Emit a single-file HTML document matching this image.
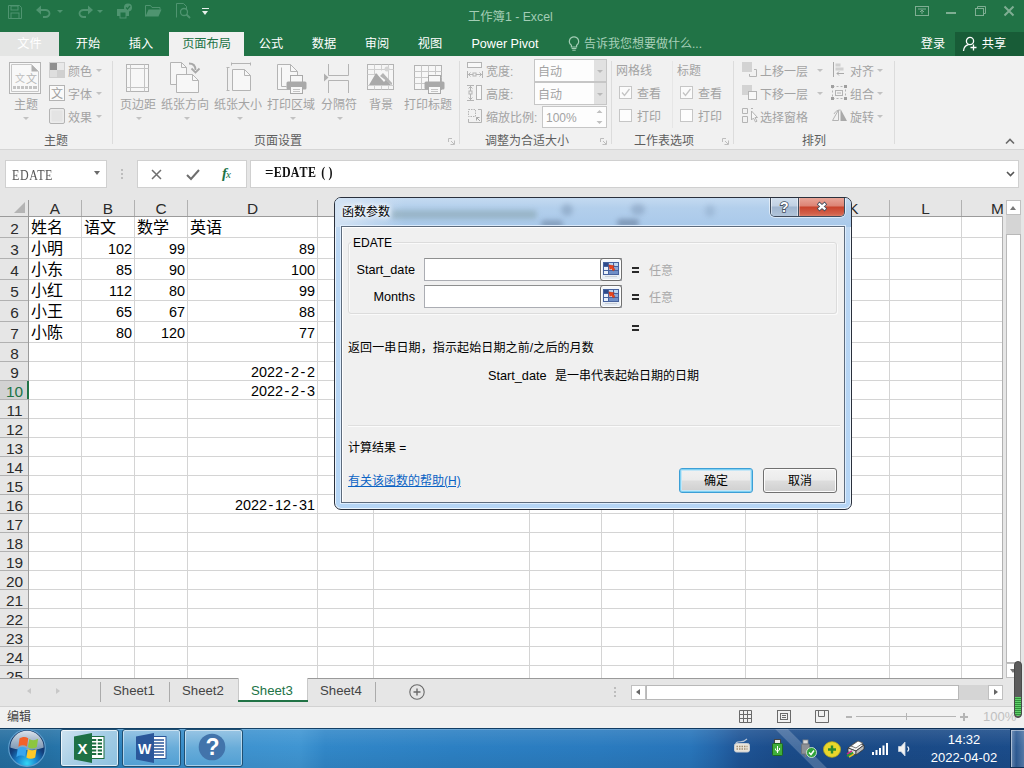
<!DOCTYPE html>
<html lang="zh-CN">
<head>
<meta charset="utf-8">
<title>工作簿1 - Excel</title>
<style>
*{box-sizing:border-box;margin:0;padding:0}
html,body{width:1024px;height:768px;overflow:hidden;background:#e6e6e6}
body{position:relative;font-family:"Liberation Sans","Noto Sans CJK SC",sans-serif;font-size:12px;color:#000}
.abs{position:absolute}
.t{position:absolute;white-space:nowrap;line-height:1}
svg{position:absolute;overflow:visible}
/* title */
#titlebar{left:0;top:0;width:1024px;height:56px;background:#217346}
.tab{position:absolute;top:32px;height:24px;line-height:24px;font-size:12.200px;color:#fff;text-align:center;white-space:nowrap}
#ribbon{left:0;top:56px;width:1024px;height:94px;background:#f1f1f1;border-bottom:1px solid #d5d5d5}
.rl{position:absolute;white-space:nowrap;line-height:1;font-size:12px;color:#a3a3a3}
.gl{position:absolute;white-space:nowrap;line-height:1;font-size:12px;color:#5e5e5e}
.vsep{position:absolute;top:61px;height:83px;width:1px;background:#dcdcdc}
.dd{position:absolute;width:0;height:0;border-left:3px solid transparent;border-right:3px solid transparent;border-top:3px solid #c2c2c2}
/* grid */
#grid{left:0;top:198px;width:1004px;height:480px;background:#fff;overflow:hidden}
.ch{position:absolute;top:0;height:18px;line-height:22px;font-size:15.400px;color:#2b2b2b;text-align:center;background:#e6e6e6}
.rh{position:absolute;left:0;width:28px;padding-left:1px;font-size:15.400px;color:#2b2b2b;text-align:center;background:#e6e6e6}
.c{position:absolute;font-size:14.67px;line-height:21px;white-space:nowrap;color:#000}
.r{text-align:right}
/* dialog */
#dlg{left:334px;top:197px;width:518px;height:313px;border:1px solid #2a303c;border-radius:7px;background:linear-gradient(180deg,#c6dbf1 0,#b9d6f4 60px,#b5d5f5 100%);box-shadow:inset 0 0 0 1px rgba(255,255,255,.75);overflow:hidden}
#dlg .d{position:absolute;white-space:nowrap;line-height:1;font-size:12px;color:#000}
#cli{left:6px;top:28px;width:504px;height:277px;border:1px solid #5d6b7c;background:#f0f0f0;box-shadow:inset 1px 1px 0 #fff,0 0 0 1px rgba(228,241,255,.85)}
.inp{position:absolute;left:424px;width:198px;height:23px;background:#fff;border:1px solid #abadb3;border-top-color:#8e8f8f}
.rbtn{position:absolute;left:600px;width:22px;height:23px;border:1px solid #707070;border-radius:3px;background:linear-gradient(180deg,#f6f9fc,#e4ebf3);box-shadow:inset 0 0 0 1px #fdfdfd}
.btn{position:absolute;top:468px;width:74px;height:25px;border:1px solid #707070;border-radius:3px;background:linear-gradient(180deg,#f2f2f2 0,#ebebeb 48%,#dddddd 52%,#cfcfcf 100%);box-shadow:inset 0 0 0 1px #fcfcfc;font-size:12px;line-height:24px;text-align:center;color:#000}
</style>
</head>
<body>

<!-- ================= TITLE BAR + TABS ================= -->
<div id="titlebar" class="abs"></div>
<!-- quick access toolbar (disabled look) -->
<svg style="left:8px;top:5px" width="14" height="14" viewBox="0 0 14 14"><path d="M.5.5h11l2 2v11H.5z" fill="none" stroke="#4f9470"/><rect x="3" y="1" width="7" height="4" fill="none" stroke="#4f9470"/><rect x="3" y="8" width="8" height="5.500" fill="none" stroke="#4f9470"/></svg>
<svg style="left:36px;top:5px" width="16" height="12" viewBox="0 0 16 12"><path d="M1 5h8.500a4 3.500 0 0 1 0 7H7" fill="none" stroke="#4f9470" stroke-width="1.800"/><path d="M0 5l5-4.500v9z" fill="#4f9470"/></svg>
<div class="dd" style="left:57px;top:10px;border-top-color:#4f9470"></div>
<svg style="left:77px;top:5px" width="16" height="12" viewBox="0 0 16 12"><path d="M15 5H6.500a4 3.500 0 0 0 0 7H9" fill="none" stroke="#4f9470" stroke-width="1.800"/><path d="M16 5l-5-4.500v9z" fill="#4f9470"/></svg>
<div class="dd" style="left:97px;top:10px;border-top-color:#4f9470"></div>
<svg style="left:116px;top:3px" width="18" height="16" viewBox="0 0 18 16"><rect x="1" y="6" width="12" height="7" fill="#4f9470"/><rect x="4" y="9" width="6" height="6" fill="#217346" stroke="#4f9470"/><circle cx="12" cy="4.500" r="4" fill="#4f9470"/><path d="M10 4.500l1.500 1.500 2.500-3" stroke="#217346" fill="none" stroke-width="1.200"/></svg>
<svg style="left:145px;top:4px" width="17" height="13" viewBox="0 0 17 13"><path d="M.5 12.500v-11h5l1.500 2h8v2" fill="none" stroke="#4f9470"/><path d="M.5 12.500l3-7h13l-3 7z" fill="#4f9470"/></svg>
<svg style="left:176px;top:3px" width="15" height="16" viewBox="0 0 15 16"><path d="M.5 14.500V.5h7l3 3v3" fill="none" stroke="#4f9470"/><circle cx="8" cy="9" r="3.500" fill="none" stroke="#4f9470" stroke-width="1.300"/><path d="M10.500 11.500l3.500 3.500" stroke="#4f9470" stroke-width="1.800"/></svg>
<div class="abs" style="left:202px;top:8px;width:7px;height:1px;background:#e8f0eb"></div>
<div class="dd" style="left:202px;top:11px;border-top-color:#e8f0eb;border-width:4px 3.500px 0 3.500px"></div>

<div class="t" style="left:468px;top:10.500px;font-size:12.300px;color:#a3cdb5">工作簿1 - Excel</div>
<div class="tab" style="left:0;width:59px;background:#e4e5e4;color:#fff">文件</div>
<div class="tab" style="left:60px;width:56px">开始</div>
<div class="tab" style="left:116px;width:50px">插入</div>
<div class="tab" style="left:169px;width:75px;background:#f1f1f1;color:#217346">页面布局</div>
<div class="tab" style="left:246px;width:50px">公式</div>
<div class="tab" style="left:299px;width:50px">数据</div>
<div class="tab" style="left:352px;width:50px">审阅</div>
<div class="tab" style="left:405px;width:50px">视图</div>
<div class="tab" style="left:460px;width:90px;font-size:12.600px">Power Pivot</div>
<svg style="left:568px;top:36px" width="12" height="15" viewBox="0 0 12 15"><path d="M6 .8a4.600 4.600 0 0 0-2.600 8.400V11h5.200V9.200A4.600 4.600 0 0 0 6 .8z" fill="none" stroke="#a3cdb5" stroke-width="1.200"/><path d="M3.600 12.500h4.800M4.300 14.200h3.400" stroke="#a3cdb5" stroke-width="1"/></svg>
<div class="tab" style="left:584px;width:120px;color:#a8d0b9;text-align:left;font-size:12px">告诉我您想要做什么...</div>
<div class="tab" style="left:908px;width:50px">登录</div>
<div class="abs" style="left:955px;top:32px;width:69px;height:24px;background:#185c37"></div>
<svg style="left:961px;top:35px" width="18" height="18" viewBox="0 0 18 18"><circle cx="9" cy="6" r="3.600" fill="none" stroke="#fff" stroke-width="1.300"/><path d="M2.500 16c.3-3.600 2.400-5.700 5-6.300" fill="none" stroke="#fff" stroke-width="1.300"/><path d="M12.500 9.500v6M9.500 12.500h6" stroke="#fff" stroke-width="1.300"/></svg>
<div class="tab" style="left:979px;width:30px">共享</div>
<!-- window controls -->
<svg style="left:915px;top:6px" width="14" height="11" viewBox="0 0 14 11"><rect x=".5" y=".5" width="13" height="9" fill="none" stroke="#7fae93"/><path d="M3 3h8M7 8V4M5 6l2-2 2 2" fill="none" stroke="#7fae93"/></svg>
<div class="abs" style="left:946px;top:12px;width:10px;height:2px;background:#7fae93"></div>
<svg style="left:975px;top:6px" width="11" height="11" viewBox="0 0 11 11"><path d="M2.500 2.500v-2h8v7h-2" fill="none" stroke="#7fae93"/><rect x=".5" y="2.500" width="8" height="7" fill="none" stroke="#7fae93"/></svg>
<svg style="left:1004px;top:6px" width="10" height="10" viewBox="0 0 10 10"><path d="M.5.5l9 9M9.500.5l-9 9" stroke="#7fae93" stroke-width="2"/></svg>


<!-- ================= RIBBON ================= -->
<div id="ribbon" class="abs"></div>
<svg style="left:9px;top:62px" width="32" height="32" viewBox="0 0 32 32"><rect x=".5" y=".5" width="31" height="31" fill="#f8f8f8" stroke="#b4b4b4"/><path d="M2.500 2.500h20l7 7v20h-27z" fill="#f8f8f8" stroke="#c6c6c6"/><path d="M22.500 2.500l7 7h-7z" fill="#b0b0b0"/><text x="6" y="20" font-size="10" fill="#c0c0c0" font-family="Liberation Sans,Noto Sans CJK SC,sans-serif">文</text><text x="17" y="21" font-size="11" fill="#b5b5b5" font-family="Liberation Sans,Noto Sans CJK SC,sans-serif">文</text><path d="M4 25.500h3M8 25.500h3M12 25.500h3M16 25.500h3M20 25.500h3M24 25.500h4" stroke="#c4c4c4" stroke-width="3"/></svg>
<div class="rl" style="left:-14.0px;width:80px;text-align:center;top:99px">主题</div>
<div class="dd" style="left:23px;top:117px;border-top-color:#c2c2c2"></div>
<svg style="left:49px;top:62px" width="16" height="16" viewBox="0 0 16 16"><rect x=".5" y=".5" width="15" height="15" fill="#f4f4f4" stroke="#cfcfcf"/><rect x="1" y="1" width="7" height="7" fill="#8f8f8f"/><rect x="8" y="1" width="7" height="7" fill="#e9e9e9"/><rect x="1" y="8" width="7" height="7" fill="#dedede"/><rect x="8" y="8" width="7" height="7" fill="#d0d0d0"/></svg>
<div class="rl" style="left:68px;top:66px">颜色</div>
<div class="dd" style="left:96px;top:69px;border-top-color:#c2c2c2"></div>
<svg style="left:49px;top:85px" width="16" height="16" viewBox="0 0 16 16"><rect x=".5" y=".5" width="15" height="15" fill="#fafafa" stroke="#b4b4b4"/><text x="2" y="13" font-size="12" fill="#a0a0a0" font-family="Liberation Sans,Noto Sans CJK SC,sans-serif">文</text></svg>
<div class="rl" style="left:68px;top:89px">字体</div>
<div class="dd" style="left:96px;top:92px;border-top-color:#c2c2c2"></div>
<svg style="left:49px;top:108px" width="16" height="16" viewBox="0 0 16 16"><rect x=".5" y=".5" width="15" height="15" rx="1.500" fill="#ececec" stroke="#b4b4b4"/><rect x="2.500" y="2.500" width="11" height="11" rx="1" fill="#e4e4e4"/></svg>
<div class="rl" style="left:68px;top:112px">效果</div>
<div class="dd" style="left:96px;top:115px;border-top-color:#c2c2c2"></div>
<div class="gl" style="left:16.0px;width:80px;text-align:center;top:135px">主题</div>
<div class="vsep" style="left:112px"></div>
<svg style="left:126px;top:64px" width="24" height="29" viewBox="0 0 24 29"><rect x=".5" y=".5" width="22" height="27" fill="#f7f7f7" stroke="#b4b4b4"/><path d="M4.500 .5v27M18.500 .5v27M.5 4.500h22M.5 23.500h22" stroke="#c4c4c4" fill="none"/></svg>
<div class="rl" style="left:98.0px;width:80px;text-align:center;top:99px">页边距</div>
<div class="dd" style="left:136px;top:117px;border-top-color:#c2c2c2"></div>
<svg style="left:170px;top:62px" width="30" height="32" viewBox="0 0 30 32"><path d="M.5 .5h11l5 5v17H.5z" fill="#f6f6f6" stroke="#b4b4b4"/><path d="M11.500 .5v5h5" fill="none" stroke="#b4b4b4"/><path d="M6.500 12.500h16l6 6v12h-22z" fill="#f7f7f7" stroke="#b4b4b4"/><path d="M22.500 12.500v6h6" fill="none" stroke="#b4b4b4"/><path d="M19 1.500c4 0 6.500 2.500 6.500 6.500" fill="none" stroke="#a8a8a8" stroke-width="1.800"/><path d="M21.500 6.500l4 4 4-4" fill="none" stroke="#a8a8a8" stroke-width="1.800"/></svg>
<div class="rl" style="left:145.0px;width:80px;text-align:center;top:99px">纸张方向</div>
<div class="dd" style="left:184px;top:117px;border-top-color:#c2c2c2"></div>
<svg style="left:226px;top:62px" width="25" height="30" viewBox="0 0 25 30"><path d="M6 1.500h18M5.500 .5v3M24.500 .5v3" stroke="#b4b4b4" fill="none"/><path d="M1.500 5v24M.5 5.500h3M.5 28.500h3" stroke="#b4b4b4" fill="none"/><path d="M6.500 7.500h12l6 6v15h-18z" fill="#f7f7f7" stroke="#b4b4b4"/><path d="M18.500 7.500v6h6" fill="none" stroke="#b4b4b4"/></svg>
<div class="rl" style="left:198.0px;width:80px;text-align:center;top:99px">纸张大小</div>
<div class="dd" style="left:237px;top:117px;border-top-color:#c2c2c2"></div>
<svg style="left:277px;top:64px" width="31" height="30" viewBox="0 0 31 30"><path d="M.5 .5h13l7 7v18H.5z" fill="#f7f7f7" stroke="#b4b4b4"/><path d="M13.500 .5v7h7" fill="none" stroke="#b4b4b4"/><path d="M4.500 3.500v19h5" fill="none" stroke="#b4b4b4"/><rect x="13.500" y="11.500" width="12" height="7" fill="#f7f7f7" stroke="#a9a9a9"/><rect x="9.500" y="17.500" width="20" height="8" rx="1.500" fill="#a9a9a9"/><rect x="13.500" y="22.500" width="12" height="7" fill="#f7f7f7" stroke="#a9a9a9"/><path d="M16 25.500h7M16 27.500h7" stroke="#c4c4c4"/></svg>
<div class="rl" style="left:251.0px;width:80px;text-align:center;top:99px">打印区域</div>
<div class="dd" style="left:290px;top:117px;border-top-color:#c2c2c2"></div>
<svg style="left:323px;top:64px" width="27" height="29" viewBox="0 0 27 29"><path d="M5.500 0v11.500h20V0M5.500 29V16.500h20V29" fill="none" stroke="#b4b4b4"/><path d="M1 9.500l4.500 4L1 17.500z" fill="#b0b0b0"/></svg>
<div class="rl" style="left:299.0px;width:80px;text-align:center;top:99px">分隔符</div>
<div class="dd" style="left:337px;top:117px;border-top-color:#c2c2c2"></div>
<svg style="left:367px;top:64px" width="27" height="27" viewBox="0 0 27 27"><rect x=".5" y=".5" width="26" height="25" fill="#f6f6f6" stroke="#b4b4b4"/><path d="M.5 5.500h26M.5 10.500h10M7.500 .5v10M14.500 .5v6M21.500 .5v20M.5 21.500h26M7.500 21.500v4M14.500 21.500v4M21.500 21.500v4" stroke="#cfcfcf" fill="none"/><path d="M2 21L9 9l8 9 2-2.500 5 5.500z" fill="#a9a9a9"/><path d="M13 12l3-3 9 10v2z" fill="#b4b4b4"/><circle cx="20" cy="5" r="2.500" fill="#d4d4d4"/></svg>
<div class="rl" style="left:341.0px;width:80px;text-align:center;top:99px">背景</div>
<svg style="left:414px;top:64px" width="31" height="30" viewBox="0 0 31 30"><rect x=".5" y="1.500" width="27" height="24" fill="#f7f7f7" stroke="#b4b4b4"/><path d="M.5 7.500h27M.5 13.500h27M.5 19.500h12M7.500 1.500v24M14.500 1.500v12M21.500 1.500v9" stroke="#c8c8c8" fill="none"/><rect x="14.500" y="11.500" width="12" height="7" fill="#f7f7f7" stroke="#a9a9a9"/><rect x="10.500" y="17.500" width="20" height="8" rx="1.500" fill="#a9a9a9"/><rect x="14.500" y="22.500" width="12" height="7" fill="#f7f7f7" stroke="#a9a9a9"/><path d="M17 25.500h7M17 27.500h7" stroke="#c4c4c4"/></svg>
<div class="rl" style="left:388.0px;width:80px;text-align:center;top:99px">打印标题</div>
<div class="gl" style="left:238.0px;width:80px;text-align:center;top:135px">页面设置</div>
<svg style="left:448px;top:138px" width="7" height="7" viewBox="0 0 7 7"><path d="M.5 4V.5H4M6.500 2.500v4h-4M3 3l3 3" fill="none" stroke="#bdbdbd"/></svg>
<div class="vsep" style="left:459px"></div>
<svg style="left:467px;top:62px" width="16" height="16" viewBox="0 0 16 16"><rect x=".5" y=".5" width="14" height="5" fill="#f8f8f8" stroke="#b4b4b4"/><path d="M1 12.500h14M.5 9v7M15.500 9v7M3.500 10.500l-2 2 2 2M12.500 10.500l2 2-2 2" fill="none" stroke="#b4b4b4"/><rect x="6" y="11" width="3" height="3" fill="#f1f1f1" stroke="#b4b4b4"/></svg>
<div class="rl" style="left:486px;top:66px">宽度:</div>
<svg style="left:467px;top:85px" width="16" height="16" viewBox="0 0 16 16"><rect x="9.500" y=".5" width="5" height="14" fill="#f8f8f8" stroke="#b4b4b4"/><path d="M3.500 1v14M0 .5h7M0 15.500h7M1.500 3.500l2-2 2 2M1.500 12.500l2 2 2-2" fill="none" stroke="#b4b4b4"/><rect x="2" y="6" width="3" height="3" fill="#f1f1f1" stroke="#b4b4b4"/></svg>
<div class="rl" style="left:486px;top:89px">高度:</div>
<svg style="left:467px;top:108px" width="16" height="16" viewBox="0 0 16 16"><rect x="1.500" y="1.500" width="7" height="7" fill="none" stroke="#b4b4b4" stroke-dasharray="1.500 1"/><path d="M11 1.500h3.500v13h-13V11" fill="none" stroke="#b4b4b4"/><path d="M13 13L9.500 9.500M9.500 12.500v-3h3" fill="none" stroke="#a9a9a9"/></svg>
<div class="rl" style="left:486px;top:112px">缩放比例:</div>
<div class="abs" style="left:534px;top:59px;width:73px;height:23px;background:#fdfdfd;border:1px solid #c6c6c6"></div>
<div class="abs" style="left:594px;top:60px;width:12px;height:21px;background:#e1e1e1"></div>
<div class="dd" style="left:597px;top:70px;border-top-color:#b9b9b9"></div>
<div class="rl" style="left:538px;top:66px">自动</div>
<div class="abs" style="left:534px;top:82px;width:73px;height:23px;background:#fdfdfd;border:1px solid #c6c6c6"></div>
<div class="abs" style="left:594px;top:83px;width:12px;height:21px;background:#e1e1e1"></div>
<div class="dd" style="left:597px;top:93px;border-top-color:#b9b9b9"></div>
<div class="rl" style="left:538px;top:89px">自动</div>
<div class="abs" style="left:542px;top:106px;width:65px;height:22px;background:#fdfdfd;border:1px solid #c6c6c6"></div>
<div class="rl" style="left:546px;top:112px">100%</div>
<svg style="left:596px;top:109px" width="7" height="16" viewBox="0 0 7 16"><path d="M.5 4L3.500 1l3 3zM.5 12l3 3 3-3z" fill="#c0c0c0"/></svg>
<div class="gl" style="left:477.0px;width:100px;text-align:center;top:135px">调整为合适大小</div>
<svg style="left:600px;top:138px" width="7" height="7" viewBox="0 0 7 7"><path d="M.5 4V.5H4M6.500 2.500v4h-4M3 3l3 3" fill="none" stroke="#bdbdbd"/></svg>
<div class="vsep" style="left:611px"></div>
<div class="rl" style="left:616px;top:65px">网格线</div>
<div class="rl" style="left:677px;top:65px">标题</div>
<div class="abs" style="left:672px;top:61px;width:1px;height:67px;background:#e6e6e6"></div>
<div class="abs" style="left:619px;top:86px;width:13px;height:13px;background:#fbfbfb;border:1px solid #c6c6c6"></div>
<svg style="left:621px;top:88px" width="10" height="9" viewBox="0 0 10 9"><path d="M1 4.500l2.500 3L8.500 1" fill="none" stroke="#c4c4c4" stroke-width="1.300"/></svg>
<div class="abs" style="left:619px;top:109px;width:13px;height:13px;background:#fdfdfd;border:1px solid #c6c6c6"></div>
<div class="rl" style="left:637px;top:88px">查看</div>
<div class="rl" style="left:637px;top:111px">打印</div>
<div class="abs" style="left:680px;top:86px;width:13px;height:13px;background:#fbfbfb;border:1px solid #c6c6c6"></div>
<svg style="left:682px;top:88px" width="10" height="9" viewBox="0 0 10 9"><path d="M1 4.500l2.500 3L8.500 1" fill="none" stroke="#c4c4c4" stroke-width="1.300"/></svg>
<div class="abs" style="left:680px;top:109px;width:13px;height:13px;background:#fdfdfd;border:1px solid #c6c6c6"></div>
<div class="rl" style="left:698px;top:88px">查看</div>
<div class="rl" style="left:698px;top:111px">打印</div>
<div class="gl" style="left:624.0px;width:80px;text-align:center;top:135px">工作表选项</div>
<svg style="left:722px;top:138px" width="7" height="7" viewBox="0 0 7 7"><path d="M.5 4V.5H4M6.500 2.500v4h-4M3 3l3 3" fill="none" stroke="#bdbdbd"/></svg>
<div class="vsep" style="left:733px"></div>
<svg style="left:742px;top:62px" width="15" height="15" viewBox="0 0 15 15"><rect x="0" y="0" width="10" height="10" fill="#d3d3d3"/><path d="M12 7.500h2.500v7h-7V12" fill="none" stroke="#b4b4b4"/></svg>
<div class="rl" style="left:760px;top:66px">上移一层</div>
<div class="dd" style="left:817px;top:69px;border-top-color:#c2c2c2"></div>
<svg style="left:742px;top:85px" width="15" height="15" viewBox="0 0 15 15"><rect x="0" y="0" width="10" height="10" fill="#d3d3d3"/><rect x="6.500" y="6.500" width="8" height="8" fill="#f8f8f8" stroke="#b4b4b4"/></svg>
<div class="rl" style="left:760px;top:89px">下移一层</div>
<div class="dd" style="left:817px;top:92px;border-top-color:#c2c2c2"></div>
<svg style="left:742px;top:108px" width="16" height="16" viewBox="0 0 16 16"><path d="M.5 .5h5v5h-5zM.5 8.500h5v6h-5z" fill="none" stroke="#b4b4b4"/><path d="M9 .5h2" stroke="#b4b4b4"/><path d="M9.500 3v9l2-2 2 4 1.500-.8-2-3.700h2.500z" fill="#f8f8f8" stroke="#b4b4b4"/></svg>
<div class="rl" style="left:760px;top:112px">选择窗格</div>
<svg style="left:833px;top:62px" width="12" height="15" viewBox="0 0 12 15"><path d="M.5 0v15" stroke="#a9a9a9"/><rect x="2.500" y="1.500" width="5" height="3" fill="#d0d0d0"/><rect x="2.500" y="5.500" width="8" height="3" fill="#d0d0d0"/><path d="M11 11.500H4M6 9.500l-2 2 2 2" fill="none" stroke="#a9a9a9"/></svg>
<div class="rl" style="left:850px;top:66px">对齐</div>
<div class="dd" style="left:877px;top:69px;border-top-color:#c2c2c2"></div>
<svg style="left:831px;top:85px" width="16" height="15" viewBox="0 0 16 15"><path d="M1.500 1.500h13v12h-13z" fill="none" stroke="#b4b4b4" stroke-dasharray="2 2"/><rect x="0" y="0" width="3" height="3" fill="#9f9f9f"/><rect x="13" y="0" width="3" height="3" fill="#9f9f9f"/><rect x="0" y="12" width="3" height="3" fill="#9f9f9f"/><rect x="13" y="12" width="3" height="3" fill="#9f9f9f"/><rect x="4.500" y="5.500" width="7" height="5" fill="none" stroke="#b4b4b4"/><path d="M6 8h4" stroke="#b4b4b4"/></svg>
<div class="rl" style="left:850px;top:89px">组合</div>
<div class="dd" style="left:877px;top:92px;border-top-color:#c2c2c2"></div>
<svg style="left:832px;top:109px" width="16" height="12" viewBox="0 0 16 12"><path d="M6.500 1L.5 11.500h6z" fill="none" stroke="#b4b4b4"/><path d="M8.500 0v12h6.500z" fill="#a9a9a9"/><path d="M2 5c1.500-3 4-4 6-4" fill="none" stroke="#b4b4b4"/></svg>
<div class="rl" style="left:850px;top:112px">旋转</div>
<div class="dd" style="left:877px;top:115px;border-top-color:#c2c2c2"></div>
<div class="gl" style="left:774.0px;width:80px;text-align:center;top:135px">排列</div>
<div class="vsep" style="left:894px"></div>
<svg style="left:1005px;top:138px" width="10" height="7" viewBox="0 0 10 7"><path d="M1 5.500l4-4 4 4" fill="none" stroke="#6a6a6a" stroke-width="1.600"/></svg>


<!-- ================= FORMULA BAR ================= -->
<div class="abs" style="left:5px;top:160px;width:102px;height:28px;background:#fff;border:1px solid #d0d0d0"></div>
<div class="t" style="left:12px;top:168px;font-family:'Liberation Serif',serif;font-size:15px;color:#555;transform:scaleX(.8);transform-origin:0 0;letter-spacing:.75px">EDATE</div>
<div class="dd" style="left:94px;top:171px;border-top-color:#6a6a6a;border-width:4px 3.500px 0 3.500px"></div>
<div class="abs" style="left:121px;top:169px;width:2px;height:2px;background:#bdbdbd"></div>
<div class="abs" style="left:121px;top:173px;width:2px;height:2px;background:#bdbdbd"></div>
<div class="abs" style="left:121px;top:177px;width:2px;height:2px;background:#bdbdbd"></div>
<div class="abs" style="left:137px;top:160px;width:110px;height:28px;background:#fff;border:1px solid #d0d0d0"></div>
<svg style="left:151px;top:169px" width="11" height="11" viewBox="0 0 11 11"><path d="M1 1l9 9M10 1l-9 9" stroke="#6e6e6e" stroke-width="1.500" fill="none"/></svg>
<svg style="left:186px;top:169px" width="14" height="11" viewBox="0 0 14 11"><path d="M1 6l4 4L13 1" stroke="#6e6e6e" stroke-width="2" fill="none"/></svg>
<div class="t" style="left:222px;top:166px;font-family:'Liberation Serif',serif;font-style:italic;font-size:15px;color:#217346;letter-spacing:-1px"><b>f</b><span style="font-size:11px">x</span></div>
<div class="abs" style="left:250px;top:160px;width:769px;height:28px;background:#fff;border:1px solid #d0d0d0"></div>
<div class="t" style="left:264.700px;top:165px;font-family:'Liberation Serif',serif;font-weight:bold;font-size:15px;color:#111;transform:scaleX(.8);transform-origin:0 0"><span style="display:inline-block;width:10.700px;text-align:center;transform:scaleX(1.250)">=</span><span style="display:inline-block;width:10.700px;text-align:center">E</span><span style="display:inline-block;width:10.700px;text-align:center">D</span><span style="display:inline-block;width:10.700px;text-align:center">A</span><span style="display:inline-block;width:10.700px;text-align:center">T</span><span style="display:inline-block;width:10.700px;text-align:center">E</span><span style="display:inline-block;width:10.700px;text-align:center;margin-left:3.300px">(</span><span style="display:inline-block;width:10.700px;text-align:center;margin-left:-1.500px">)</span></div>
<svg style="left:1006px;top:171px" width="9" height="6" viewBox="0 0 9 6"><path d="M1 1l3.500 3.500L8 1" fill="none" stroke="#555" stroke-width="1.600"/></svg>


<!-- ================= GRID ================= -->
<div id="grid" class="abs">
<div class="abs" style="left:0;top:0;width:1004px;height:19px;background:#e6e6e6"></div>
<div class="abs" style="left:0;top:0;width:28px;height:480px;background:#e6e6e6"></div>
<div class="abs" style="left:81px;top:19px;width:1px;height:461px;background:#d4d4d4"></div>
<div class="abs" style="left:134px;top:19px;width:1px;height:461px;background:#d4d4d4"></div>
<div class="abs" style="left:187px;top:19px;width:1px;height:461px;background:#d4d4d4"></div>
<div class="abs" style="left:317px;top:19px;width:1px;height:461px;background:#d4d4d4"></div>
<div class="abs" style="left:373px;top:19px;width:1px;height:461px;background:#d4d4d4"></div>
<div class="abs" style="left:529px;top:19px;width:1px;height:461px;background:#d4d4d4"></div>
<div class="abs" style="left:601px;top:19px;width:1px;height:461px;background:#d4d4d4"></div>
<div class="abs" style="left:673px;top:19px;width:1px;height:461px;background:#d4d4d4"></div>
<div class="abs" style="left:745px;top:19px;width:1px;height:461px;background:#d4d4d4"></div>
<div class="abs" style="left:817px;top:19px;width:1px;height:461px;background:#d4d4d4"></div>
<div class="abs" style="left:889px;top:19px;width:1px;height:461px;background:#d4d4d4"></div>
<div class="abs" style="left:961px;top:19px;width:1px;height:461px;background:#d4d4d4"></div>
<div class="abs" style="left:29px;top:39px;width:973px;height:1px;background:#d4d4d4"></div>
<div class="abs" style="left:29px;top:60px;width:973px;height:1px;background:#d4d4d4"></div>
<div class="abs" style="left:29px;top:81px;width:973px;height:1px;background:#d4d4d4"></div>
<div class="abs" style="left:29px;top:102px;width:973px;height:1px;background:#d4d4d4"></div>
<div class="abs" style="left:29px;top:123px;width:973px;height:1px;background:#d4d4d4"></div>
<div class="abs" style="left:29px;top:144px;width:973px;height:1px;background:#d4d4d4"></div>
<div class="abs" style="left:29px;top:163px;width:973px;height:1px;background:#d4d4d4"></div>
<div class="abs" style="left:29px;top:182px;width:973px;height:1px;background:#d4d4d4"></div>
<div class="abs" style="left:29px;top:201px;width:973px;height:1px;background:#d4d4d4"></div>
<div class="abs" style="left:29px;top:220px;width:973px;height:1px;background:#d4d4d4"></div>
<div class="abs" style="left:29px;top:239px;width:973px;height:1px;background:#d4d4d4"></div>
<div class="abs" style="left:29px;top:258px;width:973px;height:1px;background:#d4d4d4"></div>
<div class="abs" style="left:29px;top:277px;width:973px;height:1px;background:#d4d4d4"></div>
<div class="abs" style="left:29px;top:296px;width:973px;height:1px;background:#d4d4d4"></div>
<div class="abs" style="left:29px;top:315px;width:973px;height:1px;background:#d4d4d4"></div>
<div class="abs" style="left:29px;top:334px;width:973px;height:1px;background:#d4d4d4"></div>
<div class="abs" style="left:29px;top:353px;width:973px;height:1px;background:#d4d4d4"></div>
<div class="abs" style="left:29px;top:372px;width:973px;height:1px;background:#d4d4d4"></div>
<div class="abs" style="left:29px;top:391px;width:973px;height:1px;background:#d4d4d4"></div>
<div class="abs" style="left:29px;top:410px;width:973px;height:1px;background:#d4d4d4"></div>
<div class="abs" style="left:29px;top:429px;width:973px;height:1px;background:#d4d4d4"></div>
<div class="abs" style="left:29px;top:448px;width:973px;height:1px;background:#d4d4d4"></div>
<div class="abs" style="left:29px;top:467px;width:973px;height:1px;background:#d4d4d4"></div>
<div class="abs" style="left:81px;top:2px;width:1px;height:16px;background:#b1b1b1"></div>
<div class="abs" style="left:134px;top:2px;width:1px;height:16px;background:#b1b1b1"></div>
<div class="abs" style="left:187px;top:2px;width:1px;height:16px;background:#b1b1b1"></div>
<div class="abs" style="left:317px;top:2px;width:1px;height:16px;background:#b1b1b1"></div>
<div class="abs" style="left:373px;top:2px;width:1px;height:16px;background:#b1b1b1"></div>
<div class="abs" style="left:529px;top:2px;width:1px;height:16px;background:#b1b1b1"></div>
<div class="abs" style="left:601px;top:2px;width:1px;height:16px;background:#b1b1b1"></div>
<div class="abs" style="left:673px;top:2px;width:1px;height:16px;background:#b1b1b1"></div>
<div class="abs" style="left:745px;top:2px;width:1px;height:16px;background:#b1b1b1"></div>
<div class="abs" style="left:817px;top:2px;width:1px;height:16px;background:#b1b1b1"></div>
<div class="abs" style="left:889px;top:2px;width:1px;height:16px;background:#b1b1b1"></div>
<div class="abs" style="left:961px;top:2px;width:1px;height:16px;background:#b1b1b1"></div>
<div class="abs" style="left:0;top:39px;width:28px;height:1px;background:#b1b1b1"></div>
<div class="abs" style="left:0;top:60px;width:28px;height:1px;background:#b1b1b1"></div>
<div class="abs" style="left:0;top:81px;width:28px;height:1px;background:#b1b1b1"></div>
<div class="abs" style="left:0;top:102px;width:28px;height:1px;background:#b1b1b1"></div>
<div class="abs" style="left:0;top:123px;width:28px;height:1px;background:#b1b1b1"></div>
<div class="abs" style="left:0;top:144px;width:28px;height:1px;background:#b1b1b1"></div>
<div class="abs" style="left:0;top:163px;width:28px;height:1px;background:#b1b1b1"></div>
<div class="abs" style="left:0;top:182px;width:28px;height:1px;background:#b1b1b1"></div>
<div class="abs" style="left:0;top:201px;width:28px;height:1px;background:#b1b1b1"></div>
<div class="abs" style="left:0;top:220px;width:28px;height:1px;background:#b1b1b1"></div>
<div class="abs" style="left:0;top:239px;width:28px;height:1px;background:#b1b1b1"></div>
<div class="abs" style="left:0;top:258px;width:28px;height:1px;background:#b1b1b1"></div>
<div class="abs" style="left:0;top:277px;width:28px;height:1px;background:#b1b1b1"></div>
<div class="abs" style="left:0;top:296px;width:28px;height:1px;background:#b1b1b1"></div>
<div class="abs" style="left:0;top:315px;width:28px;height:1px;background:#b1b1b1"></div>
<div class="abs" style="left:0;top:334px;width:28px;height:1px;background:#b1b1b1"></div>
<div class="abs" style="left:0;top:353px;width:28px;height:1px;background:#b1b1b1"></div>
<div class="abs" style="left:0;top:372px;width:28px;height:1px;background:#b1b1b1"></div>
<div class="abs" style="left:0;top:391px;width:28px;height:1px;background:#b1b1b1"></div>
<div class="abs" style="left:0;top:410px;width:28px;height:1px;background:#b1b1b1"></div>
<div class="abs" style="left:0;top:429px;width:28px;height:1px;background:#b1b1b1"></div>
<div class="abs" style="left:0;top:448px;width:28px;height:1px;background:#b1b1b1"></div>
<div class="abs" style="left:0;top:467px;width:28px;height:1px;background:#b1b1b1"></div>
<div class="abs" style="left:0;top:18px;width:1003px;height:1px;background:#9b9b9b"></div>
<div class="abs" style="left:28px;top:2px;width:1px;height:478px;background:#9b9b9b"></div>
<div class="abs" style="left:1002px;top:18px;width:1px;height:462px;background:#b1b1b1"></div>
<div class="abs" style="left:1003px;top:0;width:1px;height:480px;background:#e6e6e6"></div>
<svg style="left:14px;top:4px" width="11" height="11"><path d="M11 0V11H0Z" fill="#b4b4b4"/></svg>
<div class="ch" style="left:29px;width:52px">A</div>
<div class="ch" style="left:82px;width:52px">B</div>
<div class="ch" style="left:135px;width:52px">C</div>
<div class="ch" style="left:188px;width:129px">D</div>
<div class="ch" style="left:318px;width:55px">E</div>
<div class="ch" style="left:374px;width:155px">F</div>
<div class="ch" style="left:530px;width:71px">G</div>
<div class="ch" style="left:602px;width:71px">H</div>
<div class="ch" style="left:674px;width:71px">I</div>
<div class="ch" style="left:746px;width:71px">J</div>
<div class="ch" style="left:818px;width:71px">K</div>
<div class="ch" style="left:890px;width:71px">L</div>
<div class="ch" style="left:962px;width:71px">M</div>
<div class="rh" style="top:19px;height:20px;line-height:24px">2</div>
<div class="rh" style="top:40px;height:20px;line-height:24px">3</div>
<div class="rh" style="top:61px;height:20px;line-height:24px">4</div>
<div class="rh" style="top:82px;height:20px;line-height:24px">5</div>
<div class="rh" style="top:103px;height:20px;line-height:24px">6</div>
<div class="rh" style="top:124px;height:20px;line-height:24px">7</div>
<div class="rh" style="top:145px;height:18px;line-height:22px">8</div>
<div class="rh" style="top:164px;height:18px;line-height:22px">9</div>
<div class="rh" style="top:183px;height:18px;line-height:22px;background:#d2d2d2;color:#217346">10</div>
<div class="abs" style="left:27px;top:183px;width:2px;height:18px;background:#217346"></div>
<div class="rh" style="top:202px;height:18px;line-height:22px">11</div>
<div class="rh" style="top:221px;height:18px;line-height:22px">12</div>
<div class="rh" style="top:240px;height:18px;line-height:22px">13</div>
<div class="rh" style="top:259px;height:18px;line-height:22px">14</div>
<div class="rh" style="top:278px;height:18px;line-height:22px">15</div>
<div class="rh" style="top:297px;height:18px;line-height:22px">16</div>
<div class="rh" style="top:316px;height:18px;line-height:22px">17</div>
<div class="rh" style="top:335px;height:18px;line-height:22px">18</div>
<div class="rh" style="top:354px;height:18px;line-height:22px">19</div>
<div class="rh" style="top:373px;height:18px;line-height:22px">20</div>
<div class="rh" style="top:392px;height:18px;line-height:22px">21</div>
<div class="rh" style="top:411px;height:18px;line-height:22px">22</div>
<div class="rh" style="top:430px;height:18px;line-height:22px">23</div>
<div class="rh" style="top:449px;height:18px;line-height:22px">24</div>
<div class="rh" style="top:468px;height:18px;line-height:22px">25</div>
<div class="c" style="left:29px;top:19px;width:52px;height:20px;line-height:22px;padding-left:2px;font-size:16px">姓名</div>
<div class="c" style="left:82px;top:19px;width:52px;height:20px;line-height:22px;padding-left:2px;font-size:16px">语文</div>
<div class="c" style="left:135px;top:19px;width:52px;height:20px;line-height:22px;padding-left:2px;font-size:16px">数学</div>
<div class="c" style="left:188px;top:19px;width:129px;height:20px;line-height:22px;padding-left:2px;font-size:16px">英语</div>
<div class="c" style="left:29px;top:40px;width:52px;height:20px;line-height:22px;padding-left:2px;font-size:16px">小明</div>
<div class="c r" style="left:82px;top:40px;width:52px;height:20px;line-height:22px;padding-right:2px;font-size:14.400px">102</div>
<div class="c r" style="left:135px;top:40px;width:52px;height:20px;line-height:22px;padding-right:2px;font-size:14.400px">99</div>
<div class="c r" style="left:188px;top:40px;width:129px;height:20px;line-height:22px;padding-right:2px;font-size:14.400px">89</div>
<div class="c" style="left:29px;top:61px;width:52px;height:20px;line-height:22px;padding-left:2px;font-size:16px">小东</div>
<div class="c r" style="left:82px;top:61px;width:52px;height:20px;line-height:22px;padding-right:2px;font-size:14.400px">85</div>
<div class="c r" style="left:135px;top:61px;width:52px;height:20px;line-height:22px;padding-right:2px;font-size:14.400px">90</div>
<div class="c r" style="left:188px;top:61px;width:129px;height:20px;line-height:22px;padding-right:2px;font-size:14.400px">100</div>
<div class="c" style="left:29px;top:82px;width:52px;height:20px;line-height:22px;padding-left:2px;font-size:16px">小红</div>
<div class="c r" style="left:82px;top:82px;width:52px;height:20px;line-height:22px;padding-right:2px;font-size:14.400px">112</div>
<div class="c r" style="left:135px;top:82px;width:52px;height:20px;line-height:22px;padding-right:2px;font-size:14.400px">80</div>
<div class="c r" style="left:188px;top:82px;width:129px;height:20px;line-height:22px;padding-right:2px;font-size:14.400px">99</div>
<div class="c" style="left:29px;top:103px;width:52px;height:20px;line-height:22px;padding-left:2px;font-size:16px">小王</div>
<div class="c r" style="left:82px;top:103px;width:52px;height:20px;line-height:22px;padding-right:2px;font-size:14.400px">65</div>
<div class="c r" style="left:135px;top:103px;width:52px;height:20px;line-height:22px;padding-right:2px;font-size:14.400px">67</div>
<div class="c r" style="left:188px;top:103px;width:129px;height:20px;line-height:22px;padding-right:2px;font-size:14.400px">88</div>
<div class="c" style="left:29px;top:124px;width:52px;height:20px;line-height:22px;padding-left:2px;font-size:16px">小陈</div>
<div class="c r" style="left:82px;top:124px;width:52px;height:20px;line-height:22px;padding-right:2px;font-size:14.400px">80</div>
<div class="c r" style="left:135px;top:124px;width:52px;height:20px;line-height:22px;padding-right:2px;font-size:14.400px">120</div>
<div class="c r" style="left:188px;top:124px;width:129px;height:20px;line-height:22px;padding-right:2px;font-size:14.400px">77</div>
<div class="c r" style="left:188px;top:164px;width:129px;height:18px;line-height:20px;padding-right:2px;font-size:14.400px">2022<span style="display:inline-block;width:8px;text-align:center;letter-spacing:0">-</span>2<span style="display:inline-block;width:8px;text-align:center;letter-spacing:0">-</span>2</div>
<div class="c r" style="left:188px;top:183px;width:129px;height:18px;line-height:20px;padding-right:2px;font-size:14.400px">2022<span style="display:inline-block;width:8px;text-align:center;letter-spacing:0">-</span>2<span style="display:inline-block;width:8px;text-align:center;letter-spacing:0">-</span>3</div>
<div class="c r" style="left:188px;top:297px;width:129px;height:18px;line-height:20px;padding-right:2px;font-size:14.400px">2022<span style="display:inline-block;width:8px;text-align:center;letter-spacing:0">-</span>12<span style="display:inline-block;width:8px;text-align:center;letter-spacing:0">-</span>31</div>

</div>
<div class="abs" style="left:1004px;top:198px;width:20px;height:480px;background:#e6e6e6"></div>
<div class="abs" style="left:1006px;top:215px;width:15px;height:445px;background:#d5d5d5"></div>
<div class="abs" style="left:1006px;top:200px;width:15px;height:15px;background:#fff;border:1px solid #c0c0c0"></div>
<div class="abs" style="left:1010px;top:206px;width:0;height:0;border-left:3.500px solid transparent;border-right:3.500px solid transparent;border-bottom:4px solid #777"></div>
<div class="abs" style="left:1006px;top:234px;width:15px;height:429px;background:#fff;border:1px solid #b8b8b8"></div>
<div class="abs" style="left:1006px;top:663px;width:15px;height:15px;background:#fff;border:1px solid #c0c0c0"></div>
<div class="abs" style="left:1010px;top:669px;width:0;height:0;border-left:3.500px solid transparent;border-right:3.500px solid transparent;border-top:4px solid #777"></div>


<!-- ================= SHEET TABS / STATUS ================= -->
<div class="abs" style="left:0;top:678px;width:1024px;height:29px;background:#e6e6e6"></div>
<div class="abs" style="left:0;top:678px;width:1003px;height:1px;background:#9a9a9a"></div>
<div class="abs" style="left:0;top:706px;width:1024px;height:1px;background:#d2d2d2"></div>
<div class="abs" style="left:0;top:707px;width:1024px;height:21px;background:#f1f1f1"></div>
<div class="abs" style="left:27px;top:688px;width:0;height:0;border-top:3.500px solid transparent;border-bottom:3.500px solid transparent;border-right:4px solid #c8c8c8"></div>
<div class="abs" style="left:56px;top:688px;width:0;height:0;border-top:3.500px solid transparent;border-bottom:3.500px solid transparent;border-left:4px solid #c8c8c8"></div>
<div class="abs" style="left:100px;top:682px;width:1px;height:20px;background:#ababab"></div>
<div class="abs" style="left:169px;top:682px;width:1px;height:20px;background:#ababab"></div>
<div class="abs" style="left:375px;top:682px;width:1px;height:20px;background:#ababab"></div>
<div class="abs" style="left:238px;top:678px;width:70px;height:23px;background:#fff;border-left:1px solid #c9c9c9;border-right:1px solid #c9c9c9"></div>
<div class="abs" style="left:238px;top:700px;width:70px;height:2px;background:#217346"></div>
<div class="t" style="left:113px;top:684px;font-size:13.200px;color:#444">Sheet1</div>
<div class="t" style="left:182px;top:684px;font-size:13.200px;color:#444">Sheet2</div>
<div class="t" style="left:251px;top:684px;font-size:13.200px;color:#217346">Sheet3</div>
<div class="t" style="left:320px;top:684px;font-size:13.200px;color:#444">Sheet4</div>
<svg style="left:409px;top:684px" width="16" height="16" viewBox="0 0 16 16"><circle cx="8" cy="8" r="7.200" fill="none" stroke="#6a6a6a" stroke-width="1.100"/><path d="M4.500 8h7M8 4.500v7" stroke="#6a6a6a" stroke-width="1.400"/></svg>
<!-- h scrollbar -->
<div class="abs" style="left:614px;top:687px;width:2px;height:2px;background:#bdbdbd"></div>
<div class="abs" style="left:614px;top:691px;width:2px;height:2px;background:#bdbdbd"></div>
<div class="abs" style="left:614px;top:695px;width:2px;height:2px;background:#bdbdbd"></div>
<div class="abs" style="left:631px;top:685px;width:372px;height:15px;background:#d5d5d5"></div>
<div class="abs" style="left:631px;top:685px;width:15px;height:15px;background:#fff;border:1px solid #c0c0c0"></div>
<div class="abs" style="left:636px;top:689px;width:0;height:0;border-top:3.500px solid transparent;border-bottom:3.500px solid transparent;border-right:4px solid #666"></div>
<div class="abs" style="left:646px;top:685px;width:313px;height:15px;background:#fff;border:1px solid #b8b8b8"></div>
<div class="abs" style="left:988px;top:685px;width:15px;height:15px;background:#fff;border:1px solid #c0c0c0"></div>
<div class="abs" style="left:994px;top:689px;width:0;height:0;border-top:3.500px solid transparent;border-bottom:3.500px solid transparent;border-left:4px solid #666"></div>
<!-- status bar -->
<div class="t" style="left:7px;top:711px;font-size:12px;color:#444">编辑</div>
<svg style="left:739px;top:710px" width="14" height="13" viewBox="0 0 14 13"><path d="M.5 .5h12v12h-12zM.5 4.500h12M.5 8.500h12M4.500 .5v12M8.500 .5v12" fill="none" stroke="#6a6a6a"/></svg>
<svg style="left:777px;top:710px" width="14" height="13" viewBox="0 0 14 13"><rect x=".5" y=".5" width="13" height="12" fill="none" stroke="#6a6a6a"/><rect x="3.500" y="3.500" width="7" height="6" fill="none" stroke="#6a6a6a"/><path d="M5 5.500h4M5 7.500h4" stroke="#6a6a6a"/></svg>
<svg style="left:815px;top:710px" width="14" height="13" viewBox="0 0 14 13"><path d="M.5 .5h13v12h-13zM3.500 .5v6h6v-6" fill="none" stroke="#6a6a6a"/></svg>
<div class="abs" style="left:846px;top:716px;width:6px;height:2px;background:#b5b5b5"></div>
<div class="abs" style="left:856px;top:716px;width:100px;height:1px;background:#b5b5b5"></div>
<div class="abs" style="left:906px;top:713px;width:1px;height:7px;background:#b5b5b5"></div>
<div class="abs" style="left:960px;top:716px;width:8px;height:2px;background:#b5b5b5"></div>
<div class="abs" style="left:963px;top:713px;width:2px;height:8px;background:#b5b5b5"></div>
<div class="t" style="left:983px;top:710px;font-size:13px;color:#c0c0c0">100%</div>


<!-- ================= TASKBAR ================= -->
<div class="abs" style="left:0;top:728px;width:1024px;height:40px;background:linear-gradient(90deg,#246d9f 0,#2572a6 50px,#2f86c2 130px,#3d92cf 230px,#3f95d2 300px,#3187c8 325px,#2c80c3 450px,#2a7bbf 600px,#2875ba 690px,#2467ab 715px,#1e5496 740px,#1b4c8a 780px,#1a4a87 900px,#1b4c8a 1024px)"></div>
<div class="abs" style="left:0;top:728px;width:1024px;height:1px;background:rgba(10,40,70,.75)"></div>
<div class="abs" style="left:0;top:729px;width:1024px;height:1px;background:rgba(255,255,255,.28)"></div>
<div class="abs" style="left:0;top:730px;width:1024px;height:38px;background:linear-gradient(180deg,rgba(255,255,255,.10),rgba(255,255,255,0) 45%,rgba(0,0,0,.06))"></div>
<!-- diagonal glass streak -->
<div class="abs" style="left:770px;top:729px;width:70px;height:39px;overflow:hidden"><div class="abs" style="left:27px;top:-16px;width:9px;height:72px;background:rgba(255,255,255,.2);transform:rotate(-45deg)"></div></div>
<!-- start orb -->
<svg style="left:8px;top:729px" width="38" height="38" viewBox="0 0 38 38">
<defs><radialGradient id="og" cx="50%" cy="92%" r="75%"><stop offset="0" stop-color="#35d6f5"/><stop offset=".35" stop-color="#1a86cf"/><stop offset=".7" stop-color="#123f7c"/><stop offset="1" stop-color="#0d2f5c"/></radialGradient>
<linearGradient id="oh" x1="0" y1="0" x2="0" y2="1"><stop offset="0" stop-color="#e6edf4" stop-opacity=".95"/><stop offset="1" stop-color="#9fb4c8" stop-opacity=".75"/></linearGradient></defs>
<circle cx="19" cy="19" r="18.300" fill="url(#og)" stroke="#5f9fce" stroke-width="1.200"/>
<path d="M2.300 18.500a16.700 16.700 0 0 1 33.400 0c-7 3.200-26.400 3.200-33.400 0z" fill="url(#oh)"/>
<path d="M11.500 9.500c3-2 5.800-2 8.800-.3l-1.300 8.300c-3-1.600-5.600-1.500-8.600 .2z" fill="#f2622a"/>
<path d="M21.300 10c3 1.700 5.800 1.600 8.800-.2l-1.300 8.400c-3 1.700-5.800 1.800-8.800 .1z" fill="#8cc63f"/>
<path d="M9.800 19.300c3-1.800 5.800-1.800 8.800-.2l-1.400 8.600c-3-1.600-5.800-1.500-8.800 .2z" fill="#3aa6ee"/>
<path d="M19.800 20c3 1.700 5.800 1.600 8.800-.1l-1.400 8.500c-3 1.700-5.800 1.800-8.800 .1z" fill="#ffc928"/>
</svg>
<!-- task buttons -->
<div class="abs" style="left:60px;top:729px;width:59px;height:38px;border:1px solid #1f4f72;border-radius:3px;background:linear-gradient(135deg,#cfe3f0 0,#a9cfe6 45%,#8dc1e0 100%);box-shadow:inset 0 0 0 1px rgba(255,255,255,.7)"></div>
<div class="abs" style="left:122px;top:729px;width:59px;height:38px;border:1px solid #1f4f72;border-radius:3px;background:linear-gradient(180deg,#98c5e4 0,#68acd9 50%,#519fd3 100%);box-shadow:inset 0 0 0 1px rgba(255,255,255,.5)"></div>
<div class="abs" style="left:184px;top:729px;width:59px;height:38px;border:1px solid #1f4f72;border-radius:3px;background:linear-gradient(180deg,#98c5e4 0,#68acd9 50%,#519fd3 100%);box-shadow:inset 0 0 0 1px rgba(255,255,255,.5)"></div>
<!-- excel icon -->
<svg style="left:74px;top:733px" width="31" height="31" viewBox="0 0 31 31"><rect x="16" y="3.500" width="14" height="22" fill="#fff" stroke="#1e6e41"/><path d="M18 7h10M18 10.500h10M18 14h10M18 17.500h10M18 21h10" stroke="#1e6e41" stroke-width="2"/><path d="M23 4v21" stroke="#fff" stroke-width="1.500"/><path d="M0 3.500L18 0v30L0 26.500z" fill="#1e7145"/><text x="3.500" y="21" font-family="Liberation Sans,sans-serif" font-weight="bold" font-size="15" fill="#fff">X</text></svg>
<!-- word icon -->
<svg style="left:136px;top:733px" width="31" height="31" viewBox="0 0 31 31"><rect x="16" y="3.500" width="14" height="22" fill="#fff" stroke="#2b579a"/><path d="M18 7h10M18 10h10M18 13h10M18 16h10M18 19h10M18 22h10" stroke="#2b579a" stroke-width="1.500"/><path d="M0 3.500L18 0v30L0 26.500z" fill="#2b579a"/><text x="2" y="21" font-family="Liberation Sans,sans-serif" font-weight="bold" font-size="14" fill="#fff">W</text></svg>
<!-- help icon -->
<svg style="left:198px;top:733px" width="28" height="28" viewBox="0 0 28 28"><circle cx="14" cy="14" r="13.300" fill="#4274ab"/><text x="7.500" y="22" font-family="Liberation Sans,sans-serif" font-weight="bold" font-size="23" fill="#fff">?</text></svg>
<!-- tray icons -->
<svg style="left:734px;top:738px" width="16" height="15" viewBox="0 0 16 15"><path d="M2 5c3-3 6 1 11-4" fill="none" stroke="#b9c6d6" stroke-width="1.200"/><rect x=".5" y="5.500" width="15" height="8.500" rx="2" fill="#e9e4da" stroke="#c9cdd3"/><path d="M2.500 8.500h11M2.500 11h11" stroke="#a08c72" stroke-width="1.500" stroke-dasharray="1.500 1"/></svg>
<svg style="left:772px;top:739px" width="11" height="17" viewBox="0 0 11 17"><rect x="2.500" y=".5" width="6" height="4" fill="#e8e8e8" stroke="#444"/><rect x=".5" y="4.500" width="10" height="12" rx="1" fill="#3fae3a" stroke="#1d6a1f"/><path d="M5.500 7v7M3.500 9.500v1.500l2 1.500M7.500 9v2l-2 1.500" fill="none" stroke="#fff" stroke-width="1"/></svg>
<svg style="left:800px;top:740px" width="17" height="18" viewBox="0 0 17 18"><rect x="3" y="0" width="5" height="4" fill="#d9d9d9" stroke="#8a8a8a" stroke-width=".8"/><rect x="1.500" y="4" width="8" height="10" rx="1" fill="#8d9096" stroke="#6a6d73" stroke-width=".8"/><path d="M5.500 14v3" stroke="#777" stroke-width="1.500"/><circle cx="11.500" cy="12.500" r="5" fill="#2fa23a" stroke="#e8f5e9" stroke-width=".8"/><path d="M9 12.500l2 2 3-4" fill="none" stroke="#fff" stroke-width="1.500"/></svg>
<svg style="left:823px;top:741px" width="18" height="17" viewBox="0 0 18 17"><ellipse cx="9" cy="8.500" rx="8.500" ry="7.800" fill="#e9d72c" stroke="#b9a91a" stroke-width=".8"/><path d="M5 8.500h8M9 4.500v8" stroke="#2d8a2d" stroke-width="2.400"/></svg>
<svg style="left:847px;top:740px" width="18" height="17" viewBox="0 0 18 17"><path d="M1 8l8-6 8 3-8 6z" fill="#f4f4f4" stroke="#333" stroke-width=".8"/><path d="M4 6l7-5 5 2-7 5z" fill="#fff" stroke="#555" stroke-width=".8"/><path d="M1 8v4l8 3v-4z" fill="#dcdcdc" stroke="#333" stroke-width=".8"/><path d="M9 11v4l8-6V5z" fill="#bdbdbd" stroke="#333" stroke-width=".8"/><path d="M0 14l5-3" stroke="#d02a8a" stroke-width="1.500"/><path d="M0 16l6-3.500" stroke="#2aa02a" stroke-width="1.500"/><path d="M2 17l5-3" stroke="#e0c020" stroke-width="1.500"/></svg>
<svg style="left:872px;top:743px" width="16" height="12" viewBox="0 0 16 12"><rect x="0" y="9" width="2" height="3" fill="#fff"/><rect x="3.500" y="7" width="2" height="5" fill="#fff"/><rect x="7" y="5" width="2" height="7" fill="#fff"/><rect x="10.500" y="2.500" width="2" height="9.500" fill="#fff"/><rect x="14" y="0" width="2" height="12" fill="#fff"/></svg>
<svg style="left:898px;top:741px" width="14" height="16" viewBox="0 0 14 16"><path d="M.5 5.500h2.500l4-4.500v14l-4-4.500H.5z" fill="#f2f2f2" stroke="#c9d4e2" stroke-width=".8"/><path d="M9.500 5.500c1.400 1.400 1.400 3.600 0 5" fill="none" stroke="#e8eef6" stroke-width="1.200"/></svg>
<div class="t" style="left:914px;width:100px;text-align:center;top:733px;font-size:13px;color:#fff">14:32</div>
<div class="t" style="left:914px;width:100px;text-align:center;top:751px;font-size:13px;color:#fff">2022-04-02</div>
<div class="abs" style="left:1010px;top:729px;width:14px;height:39px;border:1px solid #0e2d55;border-right:0;background:linear-gradient(90deg,rgba(255,255,255,.35),rgba(255,255,255,.08) 40%,rgba(255,255,255,.25));box-shadow:inset 1px 1px 0 rgba(255,255,255,.45)"></div>
<!-- volume overlay -->
<div class="abs" style="left:1014px;top:661px;width:8px;height:57px;border-radius:4px;background:#5c5c5c;border:1px solid #4a4a4a"></div>
<div class="abs" style="left:1015px;top:697px;width:6px;height:19px;border-radius:0 0 3px 3px;background:repeating-linear-gradient(180deg,#5fd06a 0,#5fd06a 1px,#2f8f3a 1px,#2f8f3a 2px)"></div>



<!-- ================= DIALOG ================= -->
<div id="dlg" class="abs">
  <!-- blurred glass smears in title area -->
  <div class="abs" style="left:0;top:0;width:516px;height:29px;background:linear-gradient(180deg,#c4daf1 0,#b3cfec 10px,#a9c9ea 28px)"></div>
  <div class="abs" style="left:0;top:0;width:70px;height:29px;background:linear-gradient(90deg,#d3e3f4 0,rgba(211,227,244,.6) 30px,rgba(211,227,244,0) 70px)"></div>
  <div class="abs" style="left:56px;top:12px;width:146px;height:9px;border-radius:4px;background:rgba(122,150,152,.42);filter:blur(2.500px)"></div>
  <div class="abs" style="left:206px;top:22px;width:22px;height:8px;border-radius:4px;background:rgba(90,110,140,.45);filter:blur(2.500px)"></div>
  <div class="abs" style="left:226px;top:6px;width:12px;height:12px;border-radius:6px;background:rgba(110,135,165,.4);filter:blur(2.500px)"></div>
  <div class="abs" style="left:282px;top:21px;width:22px;height:8px;border-radius:4px;background:rgba(85,105,135,.5);filter:blur(2.500px)"></div>
  <div class="abs" style="left:296px;top:6px;width:14px;height:11px;border-radius:6px;background:rgba(110,135,165,.38);filter:blur(2.500px)"></div>
  <div class="abs" style="left:370px;top:7px;width:10px;height:12px;border-radius:5px;background:rgba(120,145,175,.3);filter:blur(2.500px)"></div>
  <div class="d" style="left:7px;top:8px;text-shadow:0 0 6px #fff,0 0 10px #fff,0 0 4px #fff">函数参数</div>
  <!-- caption buttons -->
  <div class="abs" style="left:435px;top:-1px;width:75px;height:20px;border:1px solid #3e4a5b;border-top:0;border-radius:0 0 5px 5px;overflow:hidden;box-shadow:0 0 0 1px rgba(255,255,255,.55)">
    <div class="abs" style="left:0;top:0;width:27px;height:20px;background:linear-gradient(180deg,#d3e0ee 0,#c0d0e3 45%,#9fb5cf 50%,#b4c7dc 100%);box-shadow:inset 0 0 0 1px rgba(255,255,255,.5)"></div>
    <div class="abs" style="left:27px;top:0;width:1px;height:20px;background:#3e4a5b"></div>
    <div class="abs" style="left:28px;top:0;width:46px;height:20px;background:linear-gradient(180deg,#eaa99c 0,#dc8374 45%,#c8432c 50%,#d3624c 85%,#dd8a72 100%);box-shadow:inset 0 0 0 1px rgba(255,255,255,.35)"></div>
    <svg style="left:8px;top:2px" width="11" height="14" viewBox="0 0 11 14"><text x="1" y="12.500" font-family="Liberation Sans,sans-serif" font-weight="bold" font-size="14" fill="#fff" stroke="#45505f" stroke-width="1.600" paint-order="stroke">?</text></svg>
    <svg style="left:46px;top:5px" width="10" height="9" viewBox="0 0 10 9"><path d="M2.500 2.300l5 4.400M7.500 2.300l-5 4.400" stroke="#45505f" stroke-width="3.800" stroke-linecap="square"/><path d="M2.500 2.300l5 4.400M7.500 2.300l-5 4.400" stroke="#fff" stroke-width="2.200" stroke-linecap="square"/></svg>
  </div>
  <div id="cli" class="abs"></div>
</div>
<!-- dialog client content in page coords -->
<div id="dc" class="abs" style="left:0;top:0;width:0;height:0;font-size:12px">
  <!-- group box -->
  <div class="abs" style="left:348px;top:242px;width:489px;height:72px;border:1px solid #dcdcdc;border-radius:3px;box-shadow:inset 1px 1px 0 #fafafa,1px 1px 0 #fafafa"></div>
  <div class="t" style="left:351px;top:237px;background:#f0f0f0;padding:0 2px">EDATE</div>
  <div class="t" style="left:334px;width:81px;text-align:right;top:263.500px;font-size:12.700px">Start_date</div>
  <div class="t" style="left:334px;width:81px;text-align:right;top:290.500px;font-size:12.700px">Months</div>
  <div class="inp" style="top:258px"></div><div class="rbtn" style="top:258px"></div>
  <div class="inp" style="top:285px"></div><div class="rbtn" style="top:285px"></div>
  <svg style="left:603px;top:261px" width="16" height="16" viewBox="0 0 16 16"><rect x=".5" y="1.500" width="15" height="12" fill="#e9f1fb" stroke="#46629e"/><rect x="1" y="2" width="5" height="3" fill="#2d4a8a"/><rect x="6" y="2" width="9" height="3" fill="#bcd6f2"/><path d="M1 5.500h14M1 9.500h14M5.500 2v11M10.500 2v11" stroke="#46629e"/><rect x="6" y="10" width="9" height="3" fill="#6f8fc8"/><rect x="11" y="6" width="4" height="3" fill="#8aa8d8"/><path transform="translate(1.700 1) scale(.82)" d="M5 3.500l6.800 1.200-1.700 1.300 2.500 3-2.200 1.900-2.500-3-1.700 1.400z" fill="#e8431c" stroke="#b52a0e" stroke-width=".5"/><path d="M2 15.500h12" stroke="#c9ced6"/></svg>
  <svg style="left:603px;top:288px" width="16" height="16" viewBox="0 0 16 16"><rect x=".5" y="1.500" width="15" height="12" fill="#e9f1fb" stroke="#46629e"/><rect x="1" y="2" width="5" height="3" fill="#2d4a8a"/><rect x="6" y="2" width="9" height="3" fill="#bcd6f2"/><path d="M1 5.500h14M1 9.500h14M5.500 2v11M10.500 2v11" stroke="#46629e"/><rect x="6" y="10" width="9" height="3" fill="#6f8fc8"/><rect x="11" y="6" width="4" height="3" fill="#8aa8d8"/><path transform="translate(1.700 1) scale(.82)" d="M5 3.500l6.800 1.200-1.700 1.300 2.500 3-2.200 1.900-2.500-3-1.700 1.400z" fill="#e8431c" stroke="#b52a0e" stroke-width=".5"/><path d="M2 15.500h12" stroke="#c9ced6"/></svg>
  <div class="abs" style="left:632px;top:267px;width:7px;height:2px;background:#2a2a2a"></div><div class="abs" style="left:632px;top:271px;width:7px;height:2px;background:#2a2a2a"></div>
  <div class="abs" style="left:632px;top:294px;width:7px;height:2px;background:#2a2a2a"></div><div class="abs" style="left:632px;top:298px;width:7px;height:2px;background:#2a2a2a"></div>
  <div class="abs" style="left:632px;top:325px;width:7px;height:2px;background:#2a2a2a"></div><div class="abs" style="left:632px;top:329px;width:7px;height:2px;background:#2a2a2a"></div>
  <div class="t" style="left:649px;top:265px;color:#a9a9a9">任意</div>
  <div class="t" style="left:649px;top:292px;color:#a9a9a9">任意</div>
  <div class="t" style="left:348px;top:342px;letter-spacing:.12px">返回一串日期，指示起始日期之前/之后的月数</div>
  <div class="t" style="left:488px;top:369.500px;font-size:12.700px">Start_date</div>
  <div class="t" style="left:555px;top:370px">是一串代表起始日期的日期</div>
  <div class="abs" style="left:348px;top:425px;width:492px;height:1px;background:#dfdfdf"></div>
  <div class="abs" style="left:348px;top:426px;width:492px;height:1px;background:#fbfbfb"></div>
  <div class="t" style="left:348px;top:442px">计算结果 =</div>
  <div class="t" style="left:348px;top:475px;color:#0b63c4;text-decoration:underline">有关该函数的帮助(H)</div>
  <div class="btn" style="left:679px;border-color:#3c9fd6;box-shadow:inset 0 0 0 1px #7fd0f2,inset 0 0 0 2px #c4e6f6">确定</div>
  <div class="btn" style="left:763px">取消</div>
</div>


</body>
</html>
